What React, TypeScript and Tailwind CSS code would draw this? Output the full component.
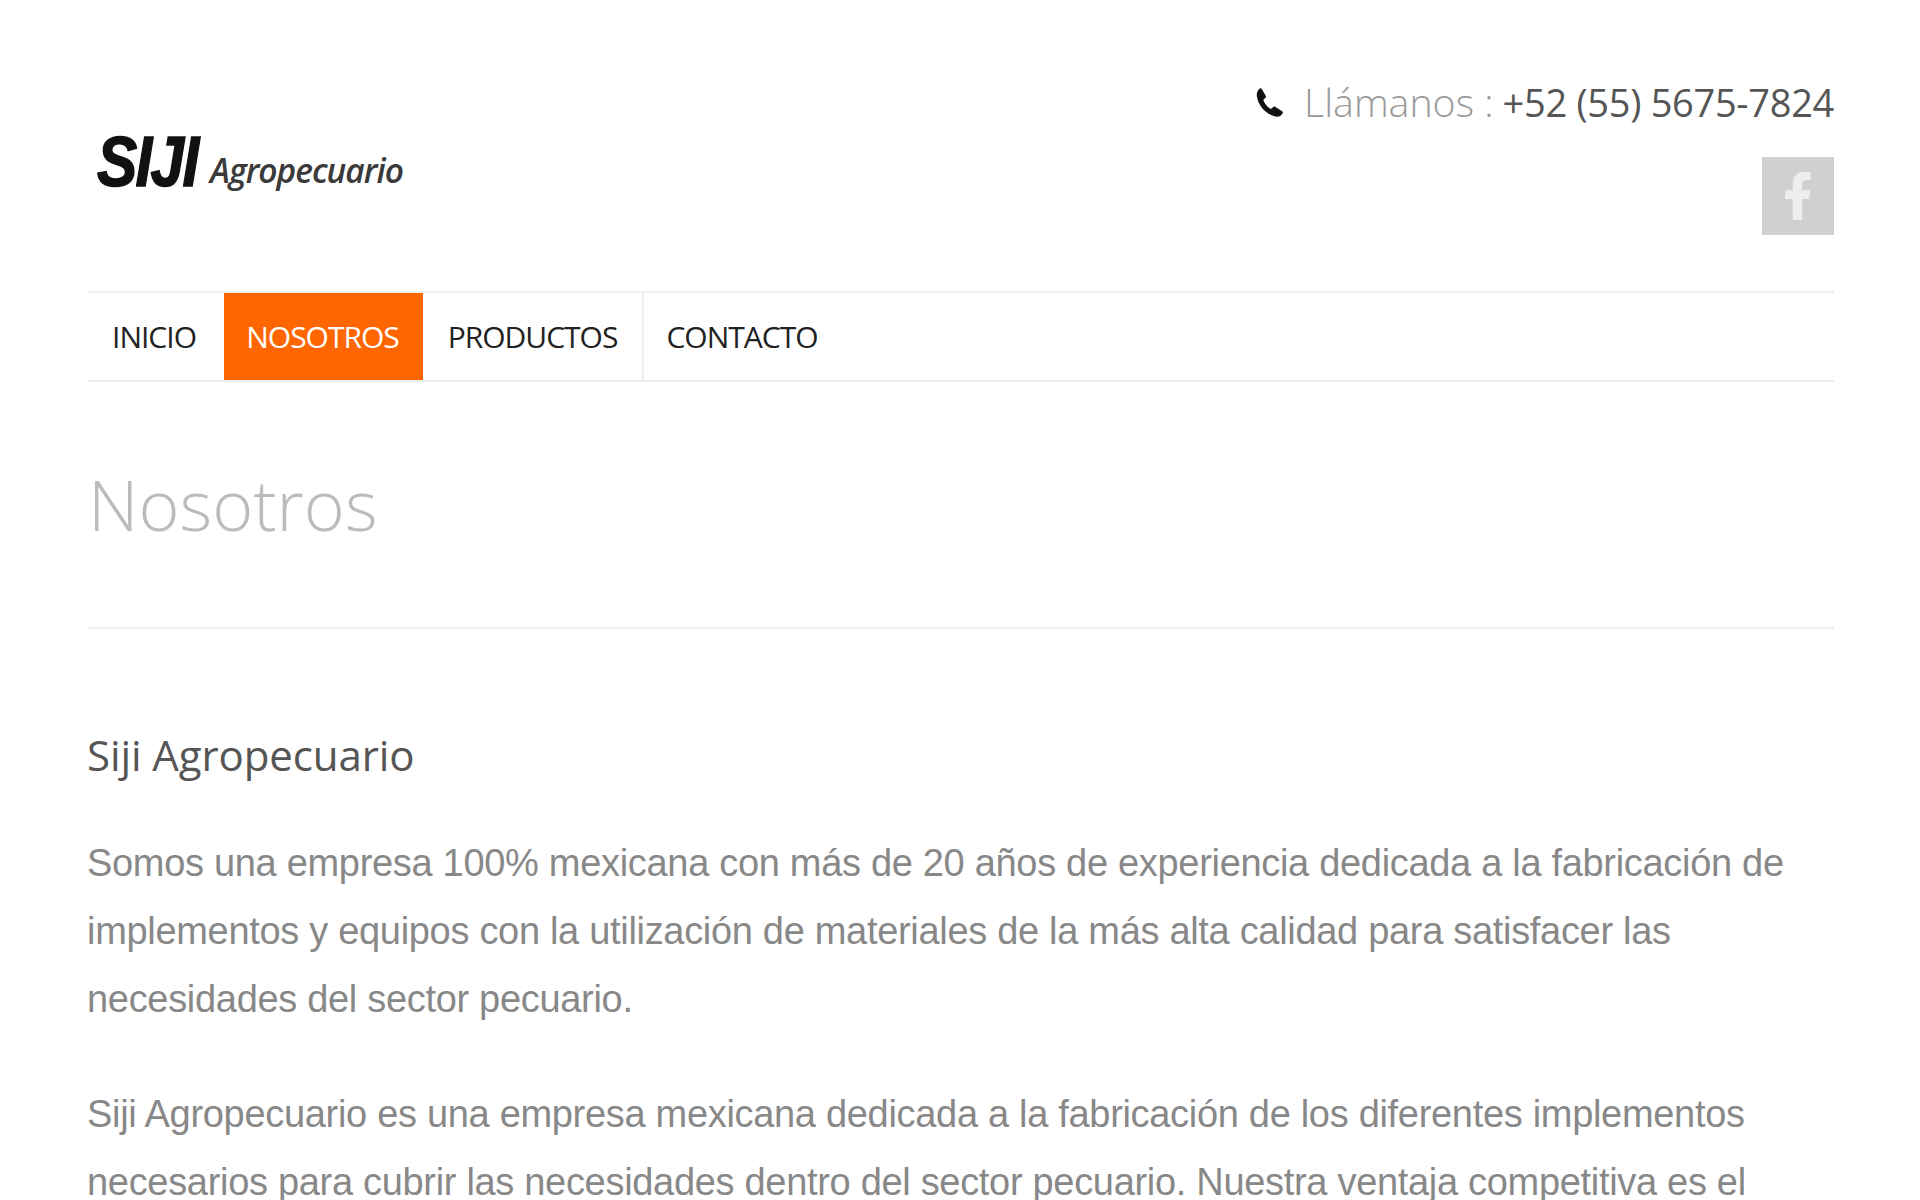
import React from "react";
import { FaFacebookF } from "react-icons/fa";

const navItems = [
  { label: "INICIO", active: false, pad: "w-[136px] pr-[4px]" },
  { label: "NOSOTROS", active: true, pad: "w-[199px] pr-[2px]" },
  { label: "PRODUCTOS", active: false, pad: "w-[221px] border-r-2 border-[#eeeeee]" },
  { label: "CONTACTO", active: false, pad: "w-[200px] pr-[4px]" },
];

function PhoneIcon() {
  return (
    <svg width="35" height="35" viewBox="0 0 24 24" fill="#111111">
      <path d="M6.6 2.6 9.4 7.4c.3.5.2 1-.2 1.4L7.700 10.200c1 2.600 2.900 4.900 5.300 6.300l1.600-1.400c.4-.4 1-.4 1.500-.1l4.600 3c.5.3.6.9.3 1.400-.9 1.600-2.500 2.700-4.400 2.300C9.700 20.300 4 14 3.300 7.300 3.100 5.300 4 3.500 5.300 2.400c.4-.3 1-.2 1.300.2Z" />
    </svg>
  );
}

export default function App() {
  return (
    <div className="h-[1200px] overflow-hidden bg-white pr-[86px] pl-[88px] font-['Open_Sans',sans-serif]">
      <header className="flex h-[291px] items-start justify-between">
        <div className="mt-[127px] ml-[9px] flex items-end">
          <span className="inline-block w-[102px] origin-left scale-x-[0.85] font-['Liberation_Sans',sans-serif] text-[71px] leading-[70px] font-bold tracking-[-2px] whitespace-nowrap text-[#111111] italic [-webkit-text-stroke:1.5px_#111111]">SIJI</span>
          <span className="mb-[7px] ml-[11px] text-[33.5px] leading-[40px] font-semibold tracking-[-1px] text-[#3a3a3a] italic">Agropecuario</span>
        </div>
        <div className="flex flex-col items-end">
          <div className="mt-[77px] flex h-[50px] items-center leading-[50px]">
            <span className="mr-[17px]"><PhoneIcon /></span>
            <span className="text-[39.3px] font-light text-[#999999]">Llámanos :</span>
            <span className="ml-[9px] text-[38px] tracking-[-0.3px] text-[#555555]">+52 (55) 5675-7824</span>
          </div>
          <div className="mt-[30px] flex h-[78px] w-[72px] items-center justify-center bg-[#d0d0d0] text-[#eeeeee]">
            <FaFacebookF size={48} />
          </div>
        </div>
      </header>

      <nav className="flex h-[91px] border-y-2 border-[#eeeeee]">
        {navItems.map((item) => (
          <a
            key={item.label}
            className={`flex items-center justify-center text-[30px] font-medium tracking-[-1px] ${item.pad} ${item.active ? "bg-[#ff6600] text-white" : "text-[#222222]"}`}
          >
            {item.label}
          </a>
        ))}
      </nav>

      <div className="flex h-[247px] items-start border-b-2 border-[#eeeeee]">
        <h1 className="mt-[82px] text-[70px] leading-[80px] font-light text-[#bbbbbb]">Nosotros</h1>
      </div>

      <h2 className="mt-[99px] -ml-[1px] text-[42px] leading-[54px] tracking-[-0.1px] text-[#555555]">Siji Agropecuario</h2>
      <div className="mt-[47px] -ml-[1px] font-['Liberation_Sans',sans-serif] text-[38px] leading-[68px] tracking-[-0.31px] text-[#888888]">
        <p>
          Somos una empresa 100% mexicana con más de 20 años de experiencia dedicada a la fabricación de implementos y equipos con la utilización de materiales de la más alta calidad para satisfacer las necesidades del sector pecuario.
        </p>
        <p className="mt-[47px]">
          Siji Agropecuario es una empresa mexicana dedicada a la fabricación de los diferentes implementos necesarios para cubrir las necesidades dentro del sector pecuario. Nuestra ventaja competitiva es el
        </p>
      </div>
    </div>
  );
}
